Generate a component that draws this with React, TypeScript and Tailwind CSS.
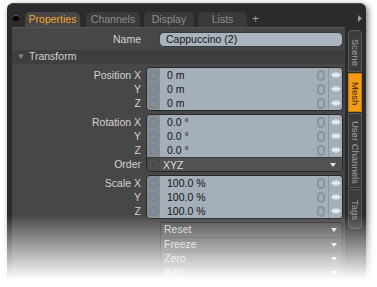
import React from "react";

type Row = { label: string; value: string; select?: boolean };

const Diamond = () => (
  <svg width="10" height="8" viewBox="0 0 10 8" className="fill-[#e6ecf0]">
    <path d="M0 4L3.4 1V7Z M10 4L6.6 1V7Z M5 0.6L6.8 4L5 7.4L3.2 4Z" />
  </svg>
);

const DropArrow = () => (
  <svg width="6" height="4" viewBox="0 0 6 4" className="fill-[#e4e4e4]">
    <path d="M0 0H6L3 4Z" />
  </svg>
);

const NumRow = ({ value }: { value: string }) => (
  <div className="flex h-[14px]">
    <div className="w-[13px] bg-[#858e96] flex items-center justify-center">
      <div className="w-[9px] h-[9px] rounded-full border border-[#737b81]" />
    </div>
    <div className="flex-1 bg-[#a4afb9] flex items-center pl-[7px] text-[#141414]">
      <span className="flex-1 leading-[14px]">{value}</span>
      <div className="w-[8px] h-[11px] rounded-full border-2 border-[#8b949c] mr-[3px]" />
    </div>
    <div className="w-[14px] bg-[#a4afb9] border-l border-[#8c959d] flex items-center justify-center">
      <Diamond />
    </div>
  </div>
);

const SelectRow = ({ value }: { value: string }) => (
  <div className="flex h-[14px] border-t border-[#3a3a3a]">
    <div className="w-[13px] bg-[#4a4a4a] flex items-center justify-center">
      <div className="w-[9px] h-[9px] rounded-full border border-[#5e5e5e]" />
    </div>
    <div className="flex-1 bg-[#525252] flex items-center pl-[3px] pr-[6px] text-[#dcdcdc]">
      <span className="flex-1 leading-[14px]">{value}</span>
      <DropArrow />
    </div>
  </div>
);

const Group = ({ rows }: { rows: Row[] }) => (
  <div className="flex">
    <div className="w-[129px] pt-px flex flex-col text-[#d4d4d4]">
      {rows.map((r, i) => (
        <div key={i} className="h-[14px] leading-[14px] text-right">
          {r.label}
        </div>
      ))}
    </div>
    <div className="ml-[5px] w-[197px] rounded-[4px] border border-[#272727] overflow-hidden flex flex-col">
      {rows.map((r, i) =>
        r.select ? <SelectRow key={i} value={r.value} /> : <NumRow key={i} value={r.value} />
      )}
    </div>
  </div>
);

const SideTab = ({ label, h, active, first, last }: { label: string; h: string; active?: boolean; first?: boolean; last?: boolean }) => (
  <div
    className={`${h} ${last ? "rounded-b-[4px]" : ""} ${first ? "rounded-t-[4px]" : ""} ${
      active ? "bg-[#f49d14] text-[#3a2508] border-[#c57c0c]" : "bg-[#3c3c3c] text-[#a3a3a3] border-[#585858]"
    } border flex justify-center pt-[3px] [writing-mode:vertical-rl] leading-[12px] text-[9.5px]`}
  >
    {label}
  </div>
);

export default function App() {
  return (
    <div className="relative w-[377px] h-[287px] bg-white overflow-hidden font-['Liberation_Sans',Arial,sans-serif] text-[10.5px]">
      <div className="ml-[7px] mt-[3px] w-[359px] h-[300px] rounded-t-[6px] bg-[#2b2b2b] border-t border-[#4a4a4a] flex flex-col shadow-[2px_2px_6px_rgba(0,0,0,0.55)]">
        {/* tab bar */}
        <div className="h-[23px] flex items-end pl-[6px] pr-[4px]">
          <div className="w-[6px] h-[6px] rounded-full bg-black border-t border-[#666] mb-[6px] mr-[6px]" />
          <div className="w-[55px] h-[15px] rounded-t-[5px] bg-[#474747] text-[#f5a330] flex items-center justify-center">
            Properties
          </div>
          <div className="ml-[6px] w-[54px] h-[15px] rounded-t-[5px] bg-[#3a3a3a] text-[#8e8e8e] flex items-center justify-center">
            Channels
          </div>
          <div className="ml-[4px] w-[50px] h-[15px] rounded-t-[5px] bg-[#3a3a3a] text-[#8e8e8e] flex items-center justify-center">
            Display
          </div>
          <div className="ml-[4px] w-[49px] h-[15px] rounded-t-[5px] bg-[#3a3a3a] text-[#8e8e8e] flex items-center justify-center">
            Lists
          </div>
          <div className="ml-[5px] h-[15px] text-[#9a9a9a] text-[12px] leading-[14px]">+</div>
          <div className="flex-1" />
          <svg width="4" height="7" viewBox="0 0 4 7" className="fill-[#9a9a9a] mb-[5px]">
            <path d="M0 0L4 3.5L0 7Z" />
          </svg>
        </div>

        {/* body */}
        <div className="flex-1 flex pl-[5px]">
          <div className="w-[333px] bg-[#474747] border-t border-[#555] flex flex-col pt-[4px] pr-[2px]">
            <div className="flex items-center h-[15px]">
              <div className="w-[129px] text-right text-[#d4d4d4]">Name</div>
              <div className="ml-[18px] flex-1 h-[15px] rounded-[5px] bg-[#a9b4be] border border-[#3a3a3a] pl-[6px] text-[#141414] leading-[13px]">
                Cappuccino (2)
              </div>
            </div>
            <div className="mt-[3px] -mr-[2px] h-[14px] rounded-[4px] bg-[#3e3e3e] flex items-center pl-[5px] text-[#d0d0d0]">
              <span className="text-[#8a8a8a] text-[8px] mr-[4px]">▼</span>
              Transform
            </div>
            <div className="mt-[3px] flex flex-col gap-[3px]">
              <Group
                rows={[
                  { label: "Position X", value: "0 m" },
                  { label: "Y", value: "0 m" },
                  { label: "Z", value: "0 m" },
                ]}
              />
              <Group
                rows={[
                  { label: "Rotation X", value: "0.0 °" },
                  { label: "Y", value: "0.0 °" },
                  { label: "Z", value: "0.0 °" },
                  { label: "Order", value: "XYZ", select: true },
                ]}
              />
              <Group
                rows={[
                  { label: "Scale X", value: "100.0 %" },
                  { label: "Y", value: "100.0 %" },
                  { label: "Z", value: "100.0 %" },
                ]}
              />
              <div className="ml-[148px] w-[183px] rounded-t-[4px] border border-[#2c2c2c] overflow-hidden flex flex-col">
                {["Reset", "Freeze", "Zero", "Add"].map((t, i) => (
                  <div
                    key={t}
                    className={`h-[14px] bg-[#4f4f4f] flex items-center pl-[3px] pr-[5px] text-[#d2d2d2] ${
                      i > 0 ? "border-t border-[#3a3a3a]" : ""
                    }`}
                  >
                    <span className="flex-1">{t}</span>
                    <DropArrow />
                  </div>
                ))}
              </div>
            </div>
          </div>

          {/* side tabs */}
          <div className="ml-[3px] w-[14px] pt-[3px] flex flex-col gap-px">
            <SideTab label="Scene" h="h-[42px]" first />
            <SideTab label="Mesh" h="h-[39px]" active />
            <SideTab label="User Channels" h="h-[75px]" />
            <SideTab label="Tags" h="h-[40px]" last />
          </div>
        </div>
      </div>

      {/* fade out at bottom */}
      <div className="absolute left-0 right-0 bottom-0 h-[72px] bg-linear-to-b from-white/0 to-white to-90%" />
    </div>
  );
}
